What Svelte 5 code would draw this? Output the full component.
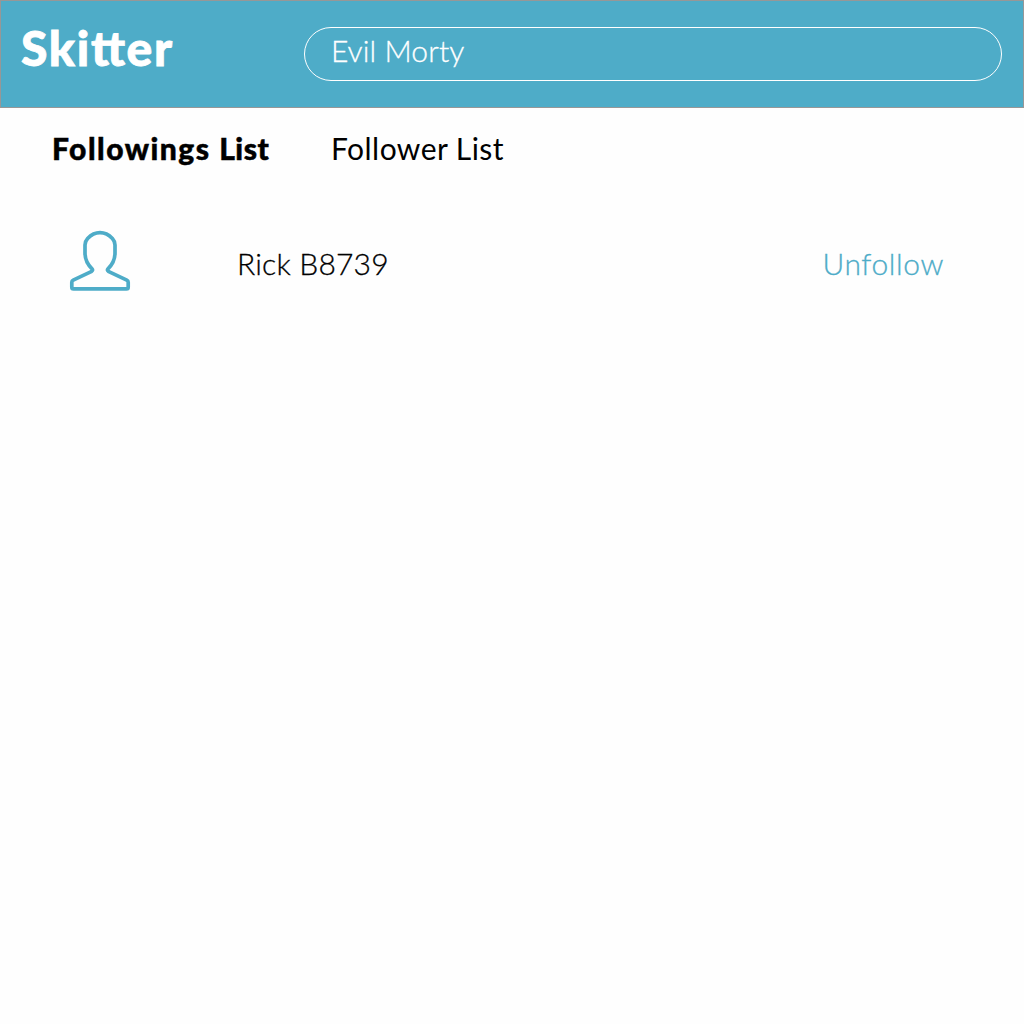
<script>
  let query = $state('Evil Morty');
  const people = [{ name: 'Rick B8739' }];
</script>

<div class="page">
  <header>
    <h1>Skitter</h1>
    <input type="text" aria-label="Search" bind:value={query} />
  </header>

  <nav>
    <a class="active" href="#followings"><span>Followings</span> <span class="tail">List</span></a>
    <a href="#followers"><span>Follower List</span></a>
  </nav>

  <main>
    {#each people as person}
      <div class="person">
        <svg viewBox="0 0 64 64" width="64" height="64" aria-hidden="true">
          <path d="M32 3.700C26.500 3.700 22.500 6.500 19.600 9.500C17.800 11.500 17 13 17 16V24C17 30 19 35 24 39.800Q25.300 41.200 23.700 42.300L5.200 51.200Q3.800 51.900 3.800 53.300V58.200Q3.800 59.900 5.500 59.900H58.500Q60.200 59.900 60.200 58.200V53.300Q60.200 51.900 58.800 51.200L40.300 42.300Q38.700 41.200 40 39.800C45 35 47 30 47 24V16C47 13 46.200 11.500 44.400 9.500C41.500 6.500 37.500 3.700 32 3.700Z" />
        </svg>
        <span class="name">{person.name}</span>
        <button type="button">Unfollow</button>
      </div>
    {/each}
  </main>
</div>

<style>
  :global(body) {
    background: #fefefe;
  }
  .page {
    box-sizing: border-box;
    min-height: 1024px;
    font-family: Lato, 'Liberation Sans', sans-serif;
    font-size: 30px;
    line-height: 40px;
    font-weight: 300;
    color: #000;
  }
  header {
    box-sizing: border-box;
    height: 108px;
    display: grid;
    grid-template-columns: 283px 698px;
    align-items: start;
    padding: 26px 0 0 20px;
    background: #4eacc8;
    border: 1px solid #979797;
  }
  h1 {
    margin: -9px 0 0;
    font-size: 48px;
    line-height: 60px;
    font-weight: 900;
    letter-spacing: 1.7px;
    font-feature-settings: 'liga' 1;
    -webkit-text-stroke: 0.8px #fff;
    color: #fff;
  }
  input {
    box-sizing: border-box;
    width: 698px;
    height: 54px;
    padding: 0 26px 8px;
    border: 1px solid #fff;
    border-radius: 27px;
    outline: none;
    background: transparent;
    color: #fff;
    font: inherit;
    letter-spacing: 0.1px;
    -webkit-text-stroke: 0.3px #fff;
  }
  nav {
    display: grid;
    grid-template-columns: 279px auto;
    padding: 20px 0 0 52px;
  }
  nav a {
    color: inherit;
    text-decoration: none;
    font-weight: 400;
    letter-spacing: 0.45px;
  }
  nav .active {
    font-weight: 900;
    letter-spacing: 1.5px;
    -webkit-text-stroke: 0.5px #000;
  }
  nav .tail {
    letter-spacing: 0.5px;
  }
  .person {
    display: grid;
    grid-template-columns: 169px 1fr auto;
    align-items: center;
    padding: 61px 80px 0 68px;
  }
  .name,
  button {
    padding: 4px 0 0;
  }
  .name {
    letter-spacing: 0.2px;
    -webkit-text-stroke: 0.3px #000;
  }
  svg {
    display: block;
    fill: none;
    stroke: #4eacc8;
    stroke-width: 3.7;
    stroke-linejoin: round;
  }
  button {
    border: 0;
    background: none;
    font: inherit;
    letter-spacing: 0.6px;
    color: #4eacc8;
    -webkit-text-stroke: 0.3px #4eacc8;
  }
</style>
